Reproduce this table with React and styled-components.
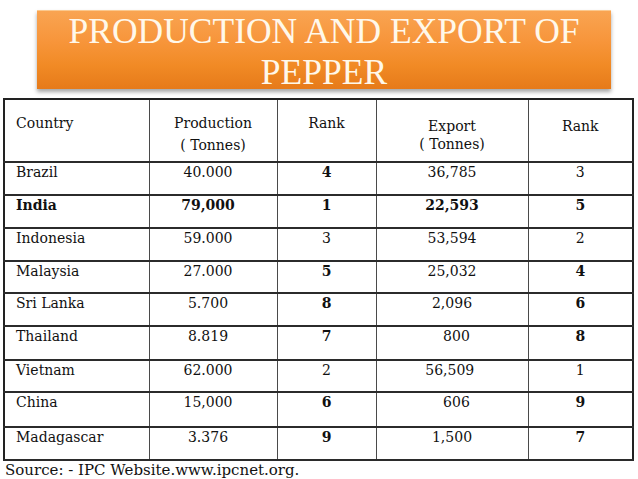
import React from "react";
import styled, { createGlobalStyle } from "styled-components";

const Global = createGlobalStyle`
  html, body { margin: 0; padding: 0; background: #ffffff; }
  body { width: 638px; height: 479px; overflow: hidden; }
`;

const Page = styled.div`
  width: 638px;
  height: 479px;
  background: #fff;
  display: flex;
  flex-direction: column;
  align-items: flex-start;
`;

const TitleBox = styled.div`
  margin: 10px 0 0 37px;
  width: 574px;
  height: 79px;
  box-sizing: border-box;
  background: linear-gradient(to bottom, #f9a452 0%, #f7953a 40%, #f18a25 70%, #e67a19 100%);
  border-top: 1px solid #fbc98f;
  box-shadow: 0 3px 4px rgba(0, 0, 0, 0.35);
  display: flex;
  justify-content: center;
`;

const TitleText = styled.h1`
  margin: 0;
  font-family: "Liberation Serif", "Times New Roman", serif;
  font-weight: 400;
  font-size: 35.5px;
  line-height: 41px;
  color: #fff8ea;
  text-align: center;
  width: 560px;
`;

const Table = styled.table`
  margin: 9px 0 0 3px;
  border-collapse: collapse;
  table-layout: fixed;
  width: 631px;
  font-family: "DejaVu Serif", "Liberation Serif", serif;
  font-size: 14px;
  color: #111;
  border: 2px solid #222;
`;

const Row = styled.tr`
  height: ${(p) => p.$h}px;
  border-bottom: 2px solid #2b2b2b;
`;

const HeadRow = styled.tr`
  height: 63px;
  border-bottom: 2px solid #2b2b2b;
`;

const HeadCell = styled.th`
  vertical-align: top;
  font-weight: 400;
  text-align: ${(p) => p.$align || "center"};
  padding: ${(p) => p.$top}px 0 0 ${(p) => (p.$align === "left" ? 11 : 0)}px;
  line-height: ${(p) => p.$lh}px;
  border-left: 1px solid #4a4a4a;
  border-right: 1px solid #4a4a4a;
  overflow: hidden;
  white-space: nowrap;
`;

const Cell = styled.td`
  vertical-align: top;
  padding: 1px ${(p) => p.$pr || 0}px 0 ${(p) => p.$pl || 0}px;
  line-height: 16px;
  text-align: ${(p) => p.$align || "center"};
  font-weight: ${(p) => (p.$bold ? 700 : 400)};
  border-left: 1px solid #4a4a4a;
  border-right: 1px solid #4a4a4a;
  white-space: pre;
  overflow: hidden;
`;

const Source = styled.div`
  margin: 1px 0 0 5px;
  font-family: "DejaVu Serif", "Liberation Serif", serif;
  font-size: 15px;
  line-height: 16px;
  color: #111;
`;

const rows = [
  { c: "Brazil", p: "40.000", r1: "4", e: "36,785", r2: "3", b1: true, b2: false, h: 33 },
  { c: "India", p: "79,000", r1: "1", e: "22,593", r2: "5", bold: true, b1: true, b2: true, h: 33 },
  { c: "Indonesia", p: "59.000", r1: "3", e: "53,594", r2: "2", b1: false, b2: false, h: 33 },
  { c: "Malaysia", p: "27.000", r1: "5", e: "25,032", r2: "4", b1: true, b2: true, h: 32 },
  { c: "Sri Lanka", p: "5.700", r1: "8", e: "2,096", r2: "6", b1: true, b2: true, h: 33 },
  { c: "Thailand", p: "8.819", r1: "7", e: "  800", r2: "8", b1: true, b2: true, h: 34 },
  { c: "Vietnam", p: "62.000", r1: "2", e: "56,509 ", r2: "1", b1: false, b2: false, h: 32 },
  { c: "China", p: "15,000", r1: "6", e: "  606", r2: "9", b1: true, b2: true, h: 35 },
  { c: "Madagascar", p: "3.376", r1: "9", e: "1,500", r2: "7", b1: true, b2: true, h: 33 },
];

export default function App() {
  return (
    <>
      <Global />
      <Page>
        <TitleBox>
          <TitleText>PRODUCTION AND EXPORT OF PEPPER</TitleText>
        </TitleBox>
        <Table>
          <colgroup>
            <col style={{ width: 145 }} />
            <col style={{ width: 128 }} />
            <col style={{ width: 99 }} />
            <col style={{ width: 152 }} />
            <col style={{ width: 105 }} />
          </colgroup>
          <thead>
            <HeadRow>
              <HeadCell $align="left" $top={12} $lh={22}>Country</HeadCell>
              <HeadCell $top={12} $lh={22}>
                Production
                <br />( Tonnes)
              </HeadCell>
              <HeadCell $top={12} $lh={22}>Rank</HeadCell>
              <HeadCell $top={17} $lh={18}>
                Export
                <br />( Tonnes)
              </HeadCell>
              <HeadCell $top={15} $lh={22}>Rank</HeadCell>
            </HeadRow>
          </thead>
          <tbody>
            {rows.map((r) => (
              <Row key={r.c} $h={r.h}>
                <Cell $align="left" $pl={11} $bold={r.bold}>{r.c}</Cell>
                <Cell $pr={10} $bold={r.bold}>{r.p}</Cell>
                <Cell $bold={r.b1}>{r.r1}</Cell>
                <Cell $bold={r.bold}>{r.e}</Cell>
                <Cell $bold={r.b2}>{r.r2}</Cell>
              </Row>
            ))}
          </tbody>
        </Table>
        <Source>Source: - IPC Website.www.ipcnet.org.</Source>
      </Page>
    </>
  );
}
